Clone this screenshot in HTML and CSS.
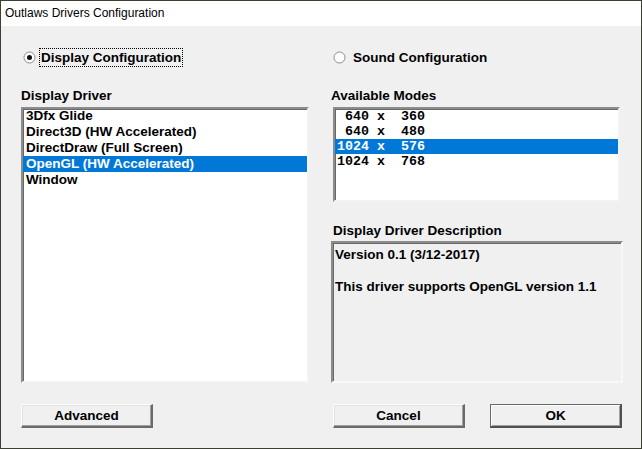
FILE: index.html
```html
<!DOCTYPE html>
<html>
<head>
<meta charset="utf-8">
<link rel="stylesheet" href="styles.css">
</head>
<body>
<div class="window">
  <div class="titlebar">Outlaws Drivers Configuration</div>
  <div class="client">
    <div class="col left">
      <div class="radio-row">
        <svg class="radio" width="13" height="13" viewBox="0 0 13 13"><circle cx="6.5" cy="6.5" r="5.5" fill="#fff" stroke="#8a8a8a"/><circle cx="6.5" cy="6.5" r="2.5" fill="#111"/></svg>
        <span class="radio-label focus">Display Configuration</span>
      </div>
      <div class="label">Display Driver</div>
      <div class="listbox drivers">
        <div class="item">3Dfx Glide</div>
        <div class="item">Direct3D (HW Accelerated)</div>
        <div class="item">DirectDraw (Full Screen)</div>
        <div class="item selected">OpenGL (HW Accelerated)</div>
        <div class="item">Window</div>
      </div>
      <div class="buttons">
        <button class="btn">Advanced</button>
      </div>
    </div>
    <div class="col right">
      <div class="radio-row">
        <svg class="radio" width="13" height="13" viewBox="0 0 13 13"><circle cx="6.5" cy="6.5" r="5.5" fill="#fff" stroke="#8a8a8a"/></svg>
        <span class="radio-label">Sound Configuration</span>
      </div>
      <div class="label">Available Modes</div>
      <div class="listbox modes">
        <div class="mode"> 640 x  360</div>
        <div class="mode"> 640 x  480</div>
        <div class="mode selected">1024 x  576</div>
        <div class="mode">1024 x  768</div>
      </div>
      <div class="label desc-label">Display Driver Description</div>
      <div class="desc">
        <div>Version 0.1 (3/12-2017)</div>
        <div>&nbsp;</div>
        <div>This driver supports OpenGL version 1.1</div>
      </div>
      <div class="buttons split">
        <button class="btn">Cancel</button>
        <button class="btn default">OK</button>
      </div>
    </div>
  </div>
</div>
</body>
</html>
```

FILE: styles.css
```css
html, body {
  margin: 0;
  padding: 0;
  background: #2f3527;
}
.window {
  width: 640px;
  height: 447px;
  border: 1px solid #3b4030;
  background: #f0f0f0;
  display: flex;
  flex-direction: column;
  font-family: "Liberation Sans", Arial, sans-serif;
  font-weight: bold;
  font-size: 13.5px;
  color: #000;
}
.titlebar {
  height: 25px;
  background: #fff;
  font-family: "Liberation Sans", Arial, sans-serif;
  font-weight: normal;
  font-size: 12px;
  line-height: 25px;
  padding-left: 4px;
  color: #000;
}
.client {
  flex: 1;
  display: grid;
  grid-template-columns: 288px 292px;
  column-gap: 22px;
  padding: 22px 0 0 20px;
}
.col {
  display: flex;
  flex-direction: column;
}
.radio-row {
  display: flex;
  align-items: center;
  height: 19px;
  padding-left: 2px;
}
.radio {
  display: block;
}
.radio-label {
  margin-left: 3px;
  padding: 0 1px;
  line-height: 17px;
  border: 1px solid transparent;
}
.right .radio-label { margin-left: 5px; }
.radio-label.focus {
  border: 1px dotted #000;
}
.label {
  margin-top: 20px;
  height: 17px;
  line-height: 17px;
}
.listbox {
  margin-top: 3px;
  background: #fff;
  border-style: solid;
  border-width: 2px;
  border-color: #8c8c8c #f3f3f3 #f3f3f3 #8c8c8c;
  box-shadow: inset 1px 1px 0 #6a6a6a;
  box-sizing: border-box;
  overflow: hidden;
}
.drivers {
  height: 276px;
}
.item {
  height: 16px;
  line-height: 16px;
  padding-left: 3px;
  white-space: nowrap;
}
.drivers .item:first-child {
  margin-top: -1px;
}
.selected {
  background: #0078d7;
  color: #fff;
}
.modes {
  width: 287px;
  margin-left: 2px;
  height: 95px;
}
.mode {
  font-family: "Liberation Mono", "DejaVu Sans Mono", monospace;
  font-weight: bold;
  font-size: 13.33px;
  height: 15px;
  line-height: 15px;
  padding-left: 2px;
  white-space: pre;
}
.desc-label {
  margin-top: 20px;
  margin-left: 2px;
}
.desc {
  margin-top: 2px;
  height: 142px;
  box-sizing: border-box;
  border-style: solid;
  border-width: 2px;
  border-color: #8c8c8c #f8f8f8 #f8f8f8 #8c8c8c;
  box-shadow: inset 1px 1px 0 #6a6a6a;
  padding: 4px 0 0 2px;
  background: #f0f0f0;
}
.desc div {
  height: 16px;
  line-height: 16px;
}
.buttons {
  margin-top: 21px;
  display: flex;
}
.buttons.split {
  justify-content: space-between;
  padding-left: 2px;
  padding-right: 1px;
}
.btn {
  width: 132px;
  height: 24px;
  box-sizing: border-box;
  font: inherit;
  color: #000;
  background: #f0f0f0;
  border-style: solid;
  border-width: 1px 2px 2px 1px;
  border-color: #ffffff #6a6a6a #6a6a6a #ffffff;
  box-shadow: inset -1px -1px 0 #a0a0a0, inset 1px 1px 0 #e3e3e3;
  padding: 0;
  line-height: 20px;
}
.btn.default {
  border-color: #696969 #505050 #505050 #696969;
  box-shadow: inset 1px 1px 0 #ffffff, inset -1px -1px 0 #a0a0a0;
}
```
